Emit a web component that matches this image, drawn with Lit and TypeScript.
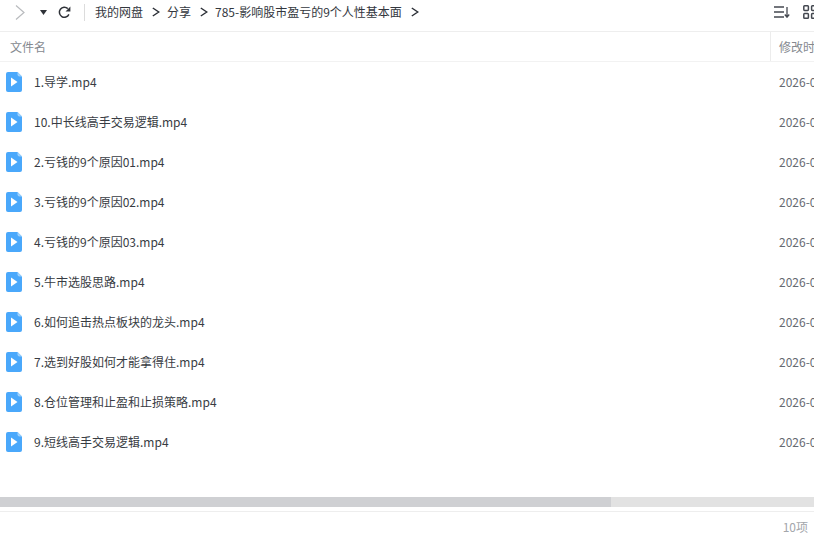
import { LitElement, html, css, svg } from "lit";
import { customElement } from "lit/decorators.js";

const files = [
  "1.导学.mp4",
  "10.中长线高手交易逻辑.mp4",
  "2.亏钱的9个原因01.mp4",
  "3.亏钱的9个原因02.mp4",
  "4.亏钱的9个原因03.mp4",
  "5.牛市选股思路.mp4",
  "6.如何追击热点板块的龙头.mp4",
  "7.选到好股如何才能拿得住.mp4",
  "8.仓位管理和止盈和止损策略.mp4",
  "9.短线高手交易逻辑.mp4",
];
const crumbs = ["我的网盘", "分享", "785-影响股市盈亏的9个人性基本面"];

const chevron = svg`<svg class="crumb-arrow" width="8" height="10" viewBox="0 0 8 10"><path d="M0.8 1 L6.8 5 L0.8 9" fill="none" stroke="#2b2f36" stroke-width="1.5"/></svg>`;

const fileIcon = svg`<svg class="file-icon" width="16" height="20" viewBox="0 0 16 20">
  <path d="M2 0 H11.5 L16 4.5 V18 a2 2 0 0 1 -2 2 H2 a2 2 0 0 1 -2 -2 V2 a2 2 0 0 1 2 -2 Z" fill="#4aa8fb"/>
  <path d="M11.5 0 L16 4.5 H13.5 a2 2 0 0 1 -2 -2 Z" fill="#9ad0fd"/>
  <path d="M5 5.5 L11.5 10 L5 14.5 Z" fill="#fff"/>
</svg>`;

@customElement("app-root")
export class AppRoot extends LitElement {
  static styles = css`
    :host {
      display: flex;
      flex-direction: column;
      width: 814px;
      height: 538px;
      overflow: hidden;
      background: #fff;
      font-family: "Microsoft YaHei", "Noto Sans CJK SC", "Noto Sans", sans-serif;
      font-size: 12px;
      line-height: 16px;
      color: #33373e;
    }
    .toolbar {
      flex: none;
      height: 24px;
      display: flex;
      align-items: center;
      padding: 0 0 7px 15px;
      border-bottom: 1px solid #eeeeee;
    }
    .forward { margin-right: 15px; }
    .drop { margin-right: 11px; }
    .refresh { margin-right: 13px; }
    .divider {
      width: 1px;
      height: 17px;
      background: #dcdcdc;
      margin-right: 10px;
    }
    .crumbs {
      display: flex;
      align-items: center;
      flex: 1;
      color: #33373e;
      white-space: nowrap;
    }
    .crumb-arrow { margin: 0 7px 0 9px; flex: none; }
    .tools {
      display: flex;
      align-items: center;
      gap: 13px;
      width: 40px;
      flex: none;
      overflow: hidden;
    }
    .tools svg { flex: none; }
    .head, .row {
      display: grid;
      grid-template-columns: 770px 1fr;
      flex: none;
    }
    .head {
      height: 29px;
      align-items: center;
      border-bottom: 1px solid #f2f2f2;
      color: #85898f;
    }
    .head .name { padding-left: 10px; }
    .head .time {
      height: 100%;
      display: flex;
      align-items: center;
      border-left: 1px solid #ececec;
      padding-left: 8px;
      white-space: nowrap;
      overflow: hidden;
    }
    .list { flex: 1; }
    .row {
      height: 40px;
      align-items: center;
    }
    .row .name {
      display: flex;
      align-items: center;
      padding-left: 6px;
      color: #383c43;
    }
    .file-icon { margin-right: 12px; flex: none; }
    .row .time {
      padding-left: 9px;
      color: #666a71;
      white-space: nowrap;
      overflow: hidden;
    }
    .scroll {
      flex: none;
      height: 10px;
      background: #e2e2e2;
      margin-bottom: 4px;
    }
    .thumb {
      width: 611px;
      height: 100%;
      background: #cfd0d3;
    }
    .foot {
      flex: none;
      height: 22px;
      padding: 4px 6px 0 0;
      border-top: 1px solid #eeeeee;
      display: flex;
      align-items: center;
      justify-content: flex-end;
      color: #a3a6ab;
    }
  `;

  render() {
    return html`
      <div class="toolbar">
        <svg class="forward" width="10" height="15" viewBox="0 0 10 15"><path d="M1 0.5 L9 7.5 L1 14.5" fill="none" stroke="#b9bbbe" stroke-width="1.2"/></svg>
        <svg class="drop" width="7" height="5" viewBox="0 0 7 5"><path d="M0 0 H7 L3.5 5 Z" fill="#2f3238"/></svg>
        <svg class="refresh" width="13" height="13" viewBox="0 0 13 13"><path d="M10.9 8.4 A5 5 0 1 1 9.8 2.6" fill="none" stroke="#2f3238" stroke-width="1.5"/><path d="M12.4 0.6 V5.4 H7.6 Z" fill="#2f3238"/></svg>
        <span class="divider"></span>
        <div class="crumbs">
          ${crumbs.map((c) => html`<span>${c}</span>${chevron}`)}
        </div>
        <div class="tools">
          <svg width="16" height="12" viewBox="0 0 16 12"><path d="M0 1 H10 M0 6 H10 M0 11 H10" stroke="#444850" stroke-width="1.3" fill="none"/><path d="M13 1 V11 M10.8 8.5 L13 11.2 L15.2 8.5" stroke="#444850" stroke-width="1.3" fill="none"/></svg>
          <svg width="14" height="14" viewBox="0 0 14 14"><g fill="none" stroke="#444850" stroke-width="1.5"><rect x="0.8" y="0.8" width="4.6" height="4.6" rx="0.8"/><rect x="8.6" y="0.8" width="4.6" height="4.6" rx="0.8"/><rect x="0.8" y="8.6" width="4.6" height="4.6" rx="0.8"/><rect x="8.6" y="8.6" width="4.6" height="4.6" rx="0.8"/></g></svg>
        </div>
      </div>
      <div class="head">
        <div class="name">文件名</div>
        <div class="time">修改时间</div>
      </div>
      <div class="list">
        ${files.map(
          (f) => html`<div class="row">
            <div class="name">${fileIcon}<span>${f}</span></div>
            <div class="time">2026-01-01 12:00</div>
          </div>`
        )}
      </div>
      <div class="scroll"><div class="thumb"></div></div>
      <div class="foot">10项</div>
    `;
  }
}
